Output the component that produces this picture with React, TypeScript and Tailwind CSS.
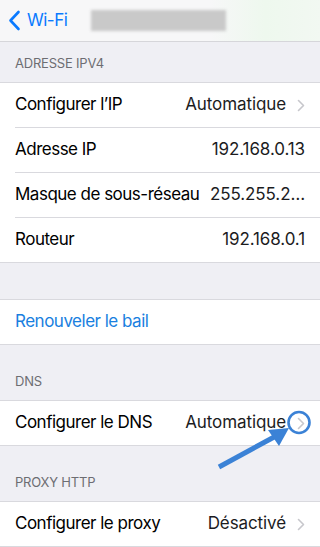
import { ReactNode } from "react";

const Chevron = () => (
  <svg width="8" height="13" viewBox="0 0 8 13" className="ml-[11px] shrink-0">
    <path d="M1.5 1.5 L6.5 6.5 L1.5 11.5" fill="none" stroke="#c7c7cc" strokeWidth="1.6" strokeLinecap="round" strokeLinejoin="round" />
  </svg>
);

const Row = ({ label, value, chevron, last }: { label: string; value?: string; chevron?: boolean; last?: boolean }) => (
  <div className="pl-[15px] bg-white">
    <div className={`flex items-center pr-[15px] ${last ? "h-[44px]" : "h-[45px] border-b border-[#d9d9de]"}`}>
      <span className="shrink-0 whitespace-nowrap text-[17px] text-black">{label}</span>
      <span className="ml-auto whitespace-nowrap pl-2 text-[17px] tracking-[-0.1px] text-[#1c1c1e]">{value}</span>
      {chevron && <Chevron />}
    </div>
  </div>
);

const Group = ({ children }: { children: ReactNode }) => (
  <div className="border-y border-[#d9d9de] bg-white">{children}</div>
);

const Header = ({ title, h }: { title: string; h: string }) => (
  <div className={`flex items-end px-[15px] pb-[9px] text-[13px] uppercase tracking-[-0.2px] text-[#6d6d72] ${h}`}>{title}</div>
);

export default function App() {
  return (
    <div className="relative h-[547px] w-[320px] overflow-hidden bg-[#efeff4] font-['Inter','Liberation_Sans',sans-serif] tracking-[-0.5px]">
      {/* Nav bar */}
      <div className="relative flex h-[42px] items-center border-b border-[#d6d6da] bg-[#f7f7f8]">
        <div className="absolute right-0 top-0 h-full w-[110px] bg-gradient-to-l from-[#f2f8f2] via-[#eef8ee] to-transparent" />
        <div className="relative flex items-center pl-[8px] text-[#0a7aff]">
          <svg width="13" height="21" viewBox="0 0 13 21">
            <path d="M10.5 2 L2.5 10.5 L10.5 19" fill="none" stroke="#0a7aff" strokeWidth="2.6" strokeLinecap="round" strokeLinejoin="round" />
          </svg>
          <span className="ml-[6px] text-[17px]">Wi-Fi</span>
        </div>
        <div className="relative ml-[24px] h-[21px] w-[135px] bg-[#c9c9c9] blur-[1.5px]" />
      </div>

      <Header title="ADRESSE IPV4" h="h-[40px]" />
      <Group>
        <Row label="Configurer l’IP" value="Automatique" chevron />
        <Row label="Adresse IP" value="192.168.0.13" />
        <Row label="Masque de sous-réseau" value="255.255.2…" />
        <Row label="Routeur" value="192.168.0.1" last />
      </Group>

      <div className="h-[36px]" />
      <Group>
        <div className="flex h-[44px] items-center px-[15px] text-[17px] text-[#1a7fe0]">Renouveler le bail</div>
      </Group>

      <Header title="DNS" h="h-[55px]" />
      <Group>
        <Row label="Configurer le DNS" value="Automatique" chevron last />
      </Group>

      <Header title="PROXY HTTP" h="h-[55px]" />
      <Group>
        <Row label="Configurer le proxy" value="Désactivé" chevron last />
      </Group>

      {/* Annotation */}
      <svg className="pointer-events-none absolute left-0 top-0" width="320" height="547">
        <circle cx="299" cy="422.5" r="10.5" fill="none" stroke="#3b82d6" strokeWidth="2.6" />
        <line x1="219" y1="467" x2="276" y2="436" stroke="#3b82d6" strokeWidth="5" strokeLinecap="butt" />
        <polygon points="289,428 268,430 279,446" fill="#3b82d6" />
      </svg>
    </div>
  );
}
